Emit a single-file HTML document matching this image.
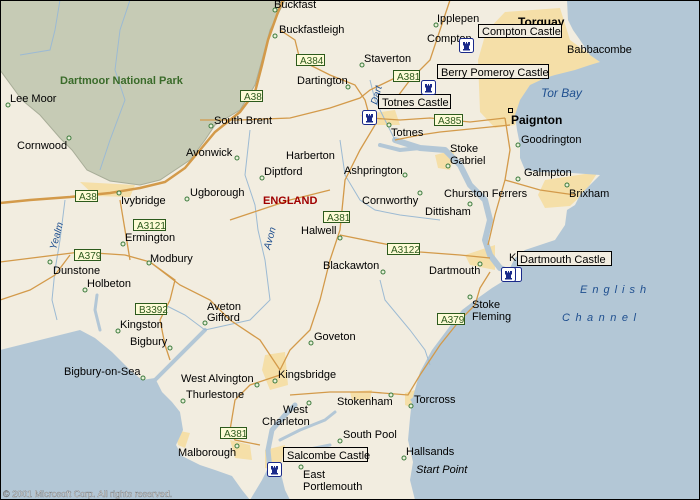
<!DOCTYPE html>
<html><head><meta charset="utf-8"><style>
html,body{margin:0;padding:0;background:#f2ede0}
svg{display:block}
text{font-family:"Liberation Sans",sans-serif;font-size:11px;fill:#000}
.sh rect{fill:#fdfbd6;stroke:#2c5a1c;stroke-width:1}
.sh text{fill:#2c5a1c;font-size:10px}
.lb rect{fill:#f2ede0;stroke:#000;stroke-width:1}
.rd{fill:none;stroke:#d39a4a;stroke-width:1.3}
.mr{fill:none;stroke:#d39a4a;stroke-width:2.5}
.rv{fill:none;stroke:#9cbad3;stroke-width:1}
.es{fill:none;stroke:#b3c7d6;stroke-linejoin:round;stroke-linecap:round}
.dot{fill:#e8f0d8;stroke:#3c7a3c;stroke-width:1}
</style></head><body>
<svg width="700" height="500" viewBox="0 0 700 500" xmlns="http://www.w3.org/2000/svg">
<rect width="700" height="500" fill="#f2ede0"/>
<!-- park -->
<path d="M0,0 L285,0 L270,30 L262,60 L255,85 L240,110 L215,125 L205,140 L190,160 L160,180 L140,185 L110,181 L87,170 L72,150 L60,138 L40,115 L22,100 L0,70 Z" fill="#c6cbb5" stroke="#a8ad98"/>
<!-- urban -->
<g fill="#f5dfa8">
<path d="M505,12 L560,8 L570,40 L600,62 L580,72 L545,80 L525,95 L515,125 L495,128 L480,112 L478,60 L486,32 Z"/>
<path d="M545,180 L598,172 L585,192 L570,206 L545,208 L538,195 Z"/>
<path d="M80,182 L135,185 L130,197 L95,196 Z"/>
<path d="M465,255 L495,245 L495,270 L470,265 Z"/>
<path d="M265,355 L285,352 L288,385 L270,390 L262,370 Z"/>
<path d="M265,450 L285,445 L280,470 L265,468 Z"/>
<path d="M230,440 L250,445 L252,460 L235,458 Z"/>
<path d="M360,115 L395,110 L400,125 L370,125 Z"/>
<path d="M435,155 L455,150 L450,170 L438,168 Z"/>
<path d="M350,392 L372,390 L370,400 L352,400 Z"/>
<path d="M405,393 L415,390 L412,408 L405,405 Z"/>
<path d="M175,430 L190,433 L185,448 L178,445 Z"/>
</g>
<!-- sea -->
<path d="M567,0 L700,0 L700,500 L415,500 L410,480 L413,462 L408,440 L410,418 L412,400 L420,372 L432,350 L447,330 L462,310 L478,298 L492,288 L505,280 L510,268 L515,258 L525,250 L540,245 L555,240 L565,225 L567,210 L575,205 L580,195 L590,185 L600,175 L572,173 L540,172 L525,170 L520,158 L520,145 L517,130 L515,115 L520,100 L530,85 L545,78 L555,75 L575,70 L590,65 L600,62 L590,55 L580,40 L573,30 L568,20 Z" fill="#b3c7d6"/>
<path d="M0,350 L20,345 L60,335 L80,330 L95,338 L112,352 L130,370 L142,380 L155,378 L162,392 L172,402 L180,412 L183,430 L176,445 L182,456 L200,465 L215,470 L232,476 L242,490 L250,500 L0,500 Z" fill="#b3c7d6"/>
<path d="M250,500 L262,480 L268,468 L280,470 L285,490 L290,500 Z" fill="#b3c7d6"/>
<!-- estuaries -->
<polyline class="es" stroke-width="6" points="395,140 420,148 445,150 460,165 470,185 485,200 490,220 485,240 490,255 500,268 510,272"/>
<polyline class="es" stroke-width="4" points="420,148 400,150 380,145"/>
<polyline class="es" stroke-width="5" points="270,470 268,450 272,430 285,415 295,405"/>
<polyline class="es" stroke-width="3" points="280,440 300,430 325,420 335,412"/>
<polyline class="es" stroke-width="3" points="285,455 305,450 330,445"/>
<polyline class="es" stroke-width="4" points="155,380 165,370 180,355 195,340 205,330"/>
<polyline class="es" stroke-width="3" points="100,330 95,310 97,295"/>
<polyline class="es" stroke-width="3" points="412,400 420,395 428,380"/>
<!-- rivers -->
<polyline class="rv" points="60,0 55,30 50,50 20,55"/>
<polyline class="rv" points="130,0 120,30 115,70 125,100 110,140 100,170"/>
<polyline class="rv" points="250,130 245,175 255,205 258,230 265,260 270,300 250,320 205,330"/>
<polyline class="rv" points="65,200 60,240 55,270 52,300 57,320"/>
<polyline class="rv" points="370,80 375,100 385,120 395,140"/>
<polyline class="rv" points="340,140 345,175 360,200 375,210 400,215 440,220"/>
<polyline class="rv" points="380,280 385,300 410,330 425,350 430,365"/>
<polyline class="rv" points="165,305 185,315 205,330"/>
<!-- roads -->
<polyline class="mr" points="0,203 30,200 70,197 110,193 140,188 165,182 185,168 200,150 215,132 240,112 255,92 262,65 268,40 278,12 283,0"/>
<polyline class="rd" points="200,120 240,120 290,118 330,108 360,98 370,90 395,78"/>
<polyline class="rd" points="280,30 295,40 300,60 330,75 355,85 365,100 370,118"/>
<polyline class="rd" points="370,118 400,120 430,118 470,122 505,118"/>
<polyline class="rd" points="395,140 420,135 440,132 480,128 510,125"/>
<polyline class="rd" points="375,125 360,150 345,180 340,230 330,260 320,300 310,330 290,350 280,370"/>
<polyline class="rd" points="280,370 260,340 230,320 210,300 180,285 150,262 125,255 80,252 0,262"/>
<polyline class="rd" points="150,262 175,280 170,300 160,320 165,345 170,360"/>
<polyline class="rd" points="280,375 250,385 235,400 230,430 235,440 260,445"/>
<polyline class="rd" points="290,395 330,392 370,392 408,395 420,375 440,345 460,320 475,305 480,288 490,272"/>
<polyline class="rd" points="340,235 390,245 420,252 460,255 490,258"/>
<polyline class="rd" points="505,118 510,150 505,180 495,215 488,245"/>
<polyline class="rd" points="505,180 540,190 575,195"/>
<polyline class="rd" points="450,0 440,30 430,60 410,80 395,100"/>
<polyline class="rd" points="120,200 125,230 130,260"/>
<polyline class="rd" points="0,300 30,290 55,275 70,255"/>
<polyline class="rd" points="230,220 260,210 290,200 330,190"/>
<!-- labels text -->
<text x="60" y="84" style="font-weight:bold;fill:#3a6b2a">Dartmoor National Park</text>
<text x="274" y="8">Buckfast</text>
<text x="279" y="33">Buckfastleigh</text>
<text x="10" y="102">Lee Moor</text>
<text x="17" y="149">Cornwood</text>
<text x="214" y="124">South Brent</text>
<text x="186" y="156">Avonwick</text>
<text x="286" y="159">Harberton</text>
<text x="264" y="175">Diptford</text>
<text x="190" y="196">Ugborough</text>
<text x="263" y="204" style="font-weight:bold;fill:#a00000">ENGLAND</text>
<text x="121" y="204">Ivybridge</text>
<text x="125" y="241">Ermington</text>
<text x="297" y="84">Dartington</text>
<text x="364" y="62">Staverton</text>
<text x="437" y="22">Ipplepen</text>
<text x="427" y="42">Compton</text>
<text x="518" y="26" style="font-weight:bold;font-size:12px">Torquay</text>
<text x="567" y="53">Babbacombe</text>
<text x="541" y="97" style="font-style:italic;fill:#1f4f8f;font-size:12px">Tor Bay</text>
<text x="511" y="124" style="font-weight:bold;font-size:12px">Paignton</text>
<text x="521" y="143">Goodrington</text>
<text x="391" y="136">Totnes</text>
<text x="450" y="152">Stoke</text>
<text x="450" y="164">Gabriel</text>
<text x="344" y="174">Ashprington</text>
<text x="362" y="204">Cornworthy</text>
<text x="444" y="197">Churston Ferrers</text>
<text x="425" y="215">Dittisham</text>
<text x="524" y="176">Galmpton</text>
<text x="569" y="197">Brixham</text>
<text x="301" y="234">Halwell</text>
<text x="323" y="269">Blackawton</text>
<text x="429" y="274">Dartmouth</text>
<text x="509" y="261">K</text>
<text x="53" y="274">Dunstone</text>
<text x="150" y="262">Modbury</text>
<text x="87" y="287">Holbeton</text>
<text x="120" y="328">Kingston</text>
<text x="130" y="345">Bigbury</text>
<text x="207" y="310">Aveton</text>
<text x="207" y="321">Gifford</text>
<text x="472" y="308">Stoke</text>
<text x="472" y="320">Fleming</text>
<text x="580" y="293" style="font-style:italic;fill:#1f4f8f;letter-spacing:5px">English</text>
<text x="562" y="321" style="font-style:italic;fill:#1f4f8f;letter-spacing:5.5px">Channel</text>
<text x="314" y="340">Goveton</text>
<text x="278" y="378">Kingsbridge</text>
<text x="181" y="382">West Alvington</text>
<text x="186" y="398">Thurlestone</text>
<text x="64" y="375">Bigbury-on-Sea</text>
<text x="283" y="413">West</text>
<text x="262" y="425">Charleton</text>
<text x="337" y="405">Stokenham</text>
<text x="414" y="403">Torcross</text>
<text x="343" y="438">South Pool</text>
<text x="178" y="456">Malborough</text>
<text x="406" y="455">Hallsands</text>
<text x="416" y="473" style="font-style:italic">Start Point</text>
<text x="303" y="478">East</text>
<text x="303" y="490">Portlemouth</text>
<text x="3" y="497" style="font-size:9px;fill:#fff;stroke:#555;stroke-width:0.3">© 2001 Microsoft Corp. All rights reserved.</text>
<text transform="translate(56,250) rotate(-75)" style="font-style:italic;fill:#1f4f8f;font-size:10px">Yealm</text>
<text transform="translate(270,250) rotate(-75)" style="font-style:italic;fill:#1f4f8f;font-size:10px">Avon</text>
<text transform="translate(377,105) rotate(-75)" style="font-style:italic;fill:#1f4f8f;font-size:10px">Dart</text>
<!-- shields -->
<g class="sh">
<rect x="75.5" y="190.5" width="22" height="11"/><text x="79" y="200">A38</text>
<rect x="240.5" y="90.5" width="22" height="11"/><text x="244" y="100">A38</text>
<rect x="296.5" y="54.5" width="28" height="11"/><text x="300" y="64">A384</text>
<rect x="393.5" y="70.5" width="26" height="11"/><text x="397" y="80">A381</text>
<rect x="434.5" y="114.5" width="28" height="11"/><text x="438" y="124">A385</text>
<rect x="133.5" y="219.5" width="32" height="11"/><text x="137" y="229">A3121</text>
<rect x="323.5" y="211.5" width="26" height="11"/><text x="327" y="221">A381</text>
<rect x="387.5" y="243.5" width="32" height="11"/><text x="391" y="253">A3122</text>
<rect x="74.5" y="249.5" width="26" height="11"/><text x="78" y="259">A379</text>
<rect x="437.5" y="313.5" width="27" height="11"/><text x="441" y="323">A379</text>
<rect x="135.5" y="303.5" width="31" height="11"/><text x="139" y="313">B3392</text>
<rect x="220.5" y="427.5" width="26" height="11"/><text x="224" y="437">A381</text>
</g>
<!-- castle label boxes -->
<g class="lb">
<rect x="478.5" y="24.5" width="83" height="13"/><text x="482" y="35">Compton Castle</text>
<rect x="437.5" y="64.5" width="111" height="14"/><text x="441" y="76">Berry Pomeroy Castle</text>
<rect x="378.5" y="94.5" width="72" height="14"/><text x="382" y="106">Totnes Castle</text>
<rect x="517.5" y="251.5" width="94" height="14"/><text x="520" y="263">Dartmouth Castle</text>
<rect x="283.5" y="447.5" width="84" height="14"/><text x="287" y="459">Salcombe Castle</text>
</g>
<!-- castle icons -->
<g>
<g transform="translate(459,38)"><rect x="0.5" y="0.5" width="14" height="14" rx="2" fill="#fff" stroke="#1a2a8a"/><rect x="2" y="2" width="11" height="11" fill="#fff"/><path d="M4,4h2v1.5h1V4h1v1.5h1V4h2v3l-1,1v3h1v1.5H4V11h1V8L4,7Z" fill="#1a2a8a"/></g>
<g transform="translate(421,80)"><rect x="0.5" y="0.5" width="14" height="14" rx="2" fill="#fff" stroke="#1a2a8a"/><path d="M4,4h2v1.5h1V4h1v1.5h1V4h2v3l-1,1v3h1v1.5H4V11h1V8L4,7Z" fill="#1a2a8a"/></g>
<g transform="translate(362,110)"><rect x="0.5" y="0.5" width="14" height="14" rx="2" fill="#fff" stroke="#1a2a8a"/><path d="M4,4h2v1.5h1V4h1v1.5h1V4h2v3l-1,1v3h1v1.5H4V11h1V8L4,7Z" fill="#1a2a8a"/></g>
<g transform="translate(507,267)"><rect x="0.5" y="0.5" width="14" height="14" rx="2" fill="#fff" stroke="#1a2a8a"/></g>
<g transform="translate(501,267)"><rect x="0.5" y="0.5" width="14" height="14" rx="2" fill="#fff" stroke="#1a2a8a"/><path d="M4,4h2v1.5h1V4h1v1.5h1V4h2v3l-1,1v3h1v1.5H4V11h1V8L4,7Z" fill="#1a2a8a"/></g>
<g transform="translate(267,462)"><rect x="0.5" y="0.5" width="14" height="14" rx="2" fill="#fff" stroke="#1a2a8a"/><path d="M4,4h2v1.5h1V4h1v1.5h1V4h2v3l-1,1v3h1v1.5H4V11h1V8L4,7Z" fill="#1a2a8a"/></g>
</g>
<!-- town dots -->
<g class="dot">
<circle cx="8" cy="105" r="2"/><circle cx="69" cy="138" r="2"/><circle cx="211" cy="126" r="2"/><circle cx="237" cy="158" r="2"/><circle cx="262" cy="178" r="2"/><circle cx="187" cy="199" r="2"/><circle cx="119" cy="193" r="2"/><circle cx="123" cy="244" r="2"/><circle cx="275" cy="10" r="2"/><circle cx="275" cy="36" r="2"/><circle cx="348" cy="87" r="2"/><circle cx="362" cy="65" r="2"/><circle cx="436" cy="25" r="2"/><circle cx="389" cy="125" r="2"/><circle cx="448" cy="166" r="2"/><circle cx="405" cy="175" r="2"/><circle cx="420" cy="193" r="2"/><circle cx="470" cy="204" r="2"/><circle cx="518" cy="179" r="2"/><circle cx="567" cy="185" r="2"/><circle cx="518" cy="145" r="2"/><circle cx="340" cy="238" r="2"/><circle cx="383" cy="272" r="2"/><circle cx="480" cy="264" r="2"/><circle cx="50" cy="262" r="2"/><circle cx="149" cy="263" r="2"/><circle cx="85" cy="290" r="2"/><circle cx="118" cy="331" r="2"/><circle cx="170" cy="348" r="2"/><circle cx="205" cy="323" r="2"/><circle cx="470" cy="297" r="2"/><circle cx="311" cy="343" r="2"/><circle cx="275" cy="381" r="2"/><circle cx="257" cy="385" r="2"/><circle cx="183" cy="401" r="2"/><circle cx="143" cy="378" r="2"/><circle cx="309" cy="403" r="2"/><circle cx="391" cy="395" r="2"/><circle cx="411" cy="406" r="2"/><circle cx="340" cy="441" r="2"/><circle cx="237" cy="446" r="2"/><circle cx="404" cy="458" r="2"/><circle cx="301" cy="467" r="2"/>
</g>
<rect x="508.5" y="108.5" width="4" height="4" fill="none" stroke="#000"/>
<rect x="0.5" y="0.5" width="699" height="499" fill="none" stroke="#000"/>
</svg>
</body></html>
